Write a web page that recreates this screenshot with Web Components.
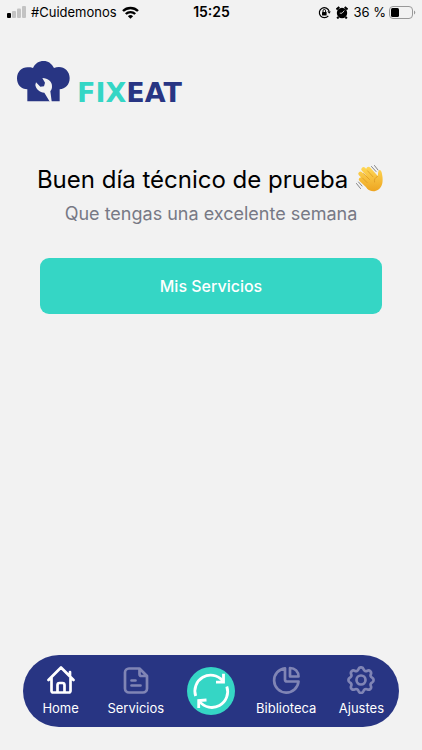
<!DOCTYPE html>
<html lang="es">
<head>
<meta charset="utf-8">
<meta name="viewport" content="width=device-width, initial-scale=1">
<title>Fixeat</title>
<style>
  body { margin: 0; background: #f2f2f2; color: #000; font-family: Inter, "Liberation Sans", sans-serif; }
</style>
</head>
<body>
<fix-app></fix-app>
<script>
const define = (name, html) => {
  const template = document.createElement('template');
  template.innerHTML = html;
  customElements.define(name, class extends HTMLElement {
    constructor() {
      super();
      this.attachShadow({ mode: 'open' }).append(template.content.cloneNode(true));
    }
  });
};

define('fix-status', `
  <style>
    :host { display: grid; grid-template-columns: 1fr auto 1fr; align-items: center; height: 24px; padding: 0 6px 0 7px; font-size: 13px; line-height: 16px; }
    div { display: flex; align-items: center; gap: 5px; white-space: nowrap; }
    .end { justify-content: flex-end; }
    time { font-weight: 600; font-size: 14px; }
    svg { display: block; flex: none; }
    .level { display: flex; align-items: center; gap: 3px; }
  </style>
  <div>
    <svg width="19" height="12" viewBox="0 0 19 12" aria-hidden="true">
      <rect y="7" width="4" height="5" rx="1"/>
      <g fill="#c3c3c3"><rect x="5" y="5" width="4" height="7" rx="1"/><rect x="10" y="2.500" width="4" height="9.500" rx="1"/><rect x="15" width="4" height="12" rx="1"/></g>
    </svg>
    <span>#Cuidemonos</span>
    <svg width="17" height="13" viewBox="0 0 17 13" fill="none" stroke="#000" stroke-width="2.400" aria-hidden="true">
      <path d="M1 5a10.800 10.800 0 0 1 15 0M3.800 8a6.800 6.800 0 0 1 9.400 0"/>
      <path d="M8.500 12.800 5.900 10.200a3.700 3.700 0 0 1 5.200 0Z" fill="#000" stroke="none"/>
    </svg>
  </div>
  <time>15:25</time>
  <div class="end">
    <svg width="13" height="13" viewBox="0 0 13 13" fill="none" stroke="#000" stroke-width="1.200" aria-hidden="true">
      <path d="M10.300 9.800A5 5 0 1 1 11.200 5.400"/><path d="m9.300 5.300 3.500.1-1.600 2.400Z" fill="#000" stroke="none"/>
      <rect x="4" y="6" width="4.600" height="3.400" rx=".5" fill="#000" stroke="none"/><path d="M5 6V4.800a1.300 1.300 0 0 1 2.600 0V6" stroke-width="1"/>
    </svg>
    <svg width="12" height="13" viewBox="0 0 12 13" aria-hidden="true">
      <circle cx="6" cy="7" r="5.200"/><path d="m.5 3.500 2.800-2.500M11.500 3.500l-2.800-2.500M2.500 11l-1.300 1.500M9.500 11l1.300 1.500" stroke="#000" stroke-width="2"/>
      <path d="M8.300 4.600 6 7.200H3.800" stroke="#f2f2f2" stroke-width=".8" fill="none"/>
    </svg>
    <span class="level">36 %
      <svg width="27" height="13" viewBox="0 0 27 13" aria-hidden="true">
        <rect x=".5" y=".5" width="23" height="12" rx="3.500" fill="none" stroke="#999"/><rect x="2" y="2" width="8" height="9" rx="1.500"/><path d="M25 4.500a2.200 2.200 0 0 1 0 4Z" fill="#999"/>
      </svg>
    </span>
  </div>`);

define('fix-logo', `
  <style>
    :host { display: flex; align-items: flex-end; gap: 7px; color: #283583; font-family: "DejaVu Sans", sans-serif; font-size: 27px; font-weight: 700; line-height: 24px; }
    svg { display: block; }
    b { color: #35d6c5; font-weight: inherit; }
  </style>
  <svg width="53" height="44" viewBox="21 18 159 132" role="img" aria-label="Gorro de chef">
    <path fill="#283583" d="M52 139V103C34 103 21 90 21 70 21 48 38 34 58 37 63 37 66 38 69 39 75 26 86 18 101 18 115 18 125 26 132 39 155 29 179 44 179 69 179 89 166 102 149 103V139Z"/>
    <path fill="#f2f2f2" d="M97 69C114 69 127 80 126 95C126 100 124 105 121 109L126 146 118 138 103 113C89 112 78 103 76 90L78 82 91 95 102 94 105 83Z"/>
  </svg>
  <span><b>FIX</b>EAT</span>`);

define('fix-wave', `
  <style>:host { display: inline-block; vertical-align: -6px; } svg { display: block; }</style>
  <svg width="30" height="30" viewBox="0 0 30 30" role="img" aria-label="Mano saludando">
    <defs><linearGradient id="skin" gradientUnits="userSpaceOnUse" x1="0" y1="2" x2="0" y2="28"><stop stop-color="#ffd957"/><stop offset="1" stop-color="#eda31f"/></linearGradient></defs>
    <g fill="none" stroke="url(#skin)" stroke-linecap="round" stroke-width="4.400">
      <path d="m6 15.500 8 7.500M5.500 9.800l11 11M8.500 5.300l11 12M13.500 5l9 10"/>
    </g>
    <path fill="url(#skin)" d="M8 14 16 8l6.500 4.500c1-1.500 0-5.500 2-6.500 2 0 2.500 3 3 7 .5 6-.5 10-4 12.500-4 3-8.500 2-11.500-1Z"/>
    <path d="m7.500 14 4.500 4.500M8.500 9.500l6 6M12.500 6.800l5.500 6M22.500 12.500c-2.500 1-3.500 3-3 5.500" fill="none" stroke="#d9931f" stroke-width=".7" stroke-linecap="round"/>
    <path d="m16.500 2.500 4.500 5M19.500 1.500l3.500 4.500M1.500 19.500l4 5M3.500 18l3.500 4" fill="none" stroke="#868686" stroke-width="1" stroke-linecap="round"/>
  </svg>`);

define('fix-greeting', `
  <style>
    :host { display: block; text-align: center; }
    h1 { margin: 0; font-size: 24px; font-weight: 400; line-height: 36px; }
    p { margin: 0; color: #777985; font-size: 18px; line-height: 32px; }
  </style>
  <h1><slot name="title"></slot> <fix-wave></fix-wave></h1>
  <p><slot></slot></p>`);

define('fix-button', `
  <style>
    :host { display: block; }
    button { display: block; width: 100%; height: 56px; border: 0; border-radius: 9px; background: #35d6c5; color: #fff; font: 500 16px/24px Inter, "Liberation Sans", sans-serif; cursor: pointer; }
  </style>
  <button type="button"><slot></slot></button>`);

define('fix-tab', `
  <style>
    :host { display: block; --ink: #8085b5; }
    :host([active]) { --ink: #fff; }
    a { display: flex; flex-direction: column; align-items: center; gap: 4px; padding-top: 2px; color: #fff; font-size: 13px; line-height: 20px; text-decoration: none; }
    ::slotted(svg) { display: block; width: 28px; height: 28px; fill: none; stroke: var(--ink); stroke-width: 2.700; stroke-linejoin: round; stroke-linecap: round; }
  </style>
  <a href="#"><slot name="icon"></slot><slot></slot></a>`);

define('fix-sync', `
  <style>
    :host { display: block; }
    button { display: block; width: 48px; height: 48px; padding: 0; border: 0; border-radius: 50%; background: #35d6c5; cursor: pointer; }
    svg { display: block; }
  </style>
  <button type="button" aria-label="Sincronizar">
    <svg width="48" height="48" viewBox="0 0 48 48" fill="none" stroke="#fff" stroke-width="2.800">
      <path d="M8.700 29A15.800 15.800 0 0 1 35.500 13.500M39.800 19.500A15.800 15.800 0 0 1 12.500 34.500"/>
      <path d="M36.500 6.800v8.400h-7.500M11.700 41v-7.500l7.800-.5"/>
    </svg>
  </button>`);

define('fix-nav', `
  <style>
    :host { display: block; }
    nav { display: grid; grid-template-columns: repeat(5, 1fr); align-items: center; justify-items: center; height: 72px; box-sizing: border-box; border-radius: 36px; background: #283583; }
  </style>
  <nav><slot></slot></nav>`);

define('fix-app', `
  <style>
    :host { display: flex; flex-direction: column; min-height: 100vh; }
    header { padding: 37px 17px 0; }
    main { flex: 1; padding: 57px 20px 24px; }
    fix-button { margin: 28px 20px 0; }
    footer { padding: 0 23px 23px; }
  </style>
  <fix-status></fix-status>
  <header><fix-logo></fix-logo></header>
  <main>
    <fix-greeting><span slot="title">Buen día técnico de prueba</span>Que tengas una excelente semana</fix-greeting>
    <fix-button>Mis Servicios</fix-button>
  </main>
  <footer>
    <fix-nav>
      <fix-tab active><svg slot="icon" viewBox="0 0 28 28"><path d="M1.500 14 14 1.500 26.500 14M4.500 11.500V25a1.500 1.500 0 0 0 1.500 1.500h16a1.500 1.500 0 0 0 1.500-1.500V11.500M23 6v4.500M10.500 26V19a2 2 0 0 1 2-2h3a2 2 0 0 1 2 2v7"/></svg>Home</fix-tab>
      <fix-tab><svg slot="icon" viewBox="0 0 28 28"><path d="M17.500 2.500H7a4 4 0 0 0-4 4v16a4 4 0 0 0 4 4h14a4 4 0 0 0 4-4V10ZM17.500 2.500V8a2 2 0 0 0 2 2H25M9.500 14.500h4M9.500 19.500h9"/></svg>Servicios</fix-tab>
      <fix-sync></fix-sync>
      <fix-tab><svg slot="icon" viewBox="0 0 28 28"><path d="M13 2.300A12.200 12.200 0 1 0 26.500 15.500H15a2 2 0 0 1-2-2ZM18 2v8.500H26.500C26.500 5.500 23 2 18 2Z"/></svg>Biblioteca</fix-tab>
      <fix-tab><svg slot="icon" viewBox="0 0 28 28"><path d="M11.500 3.200a2.600 2.600 0 0 1 5 0 2.600 2.600 0 0 0 3.800 1.600 2.600 2.600 0 0 1 3.500 3.500 2.600 2.600 0 0 0 1.400 3.500 2.600 2.600 0 0 1 0 4.600 2.600 2.600 0 0 0-1.400 3.500 2.600 2.600 0 0 1-3.500 3.500 2.600 2.600 0 0 0-3.800 1.600 2.600 2.600 0 0 1-5 0 2.600 2.600 0 0 0-3.800-1.600 2.600 2.600 0 0 1-3.500-3.500 2.600 2.600 0 0 0-1.400-3.500 2.600 2.600 0 0 1 0-4.600 2.600 2.600 0 0 0 1.400-3.500 2.600 2.600 0 0 1 3.500-3.500 2.600 2.600 0 0 0 3.800-1.600Z"/><circle cx="14" cy="14" r="4.500"/></svg>Ajustes</fix-tab>
    </fix-nav>
  </footer>`);
</script>
</body>
</html>
